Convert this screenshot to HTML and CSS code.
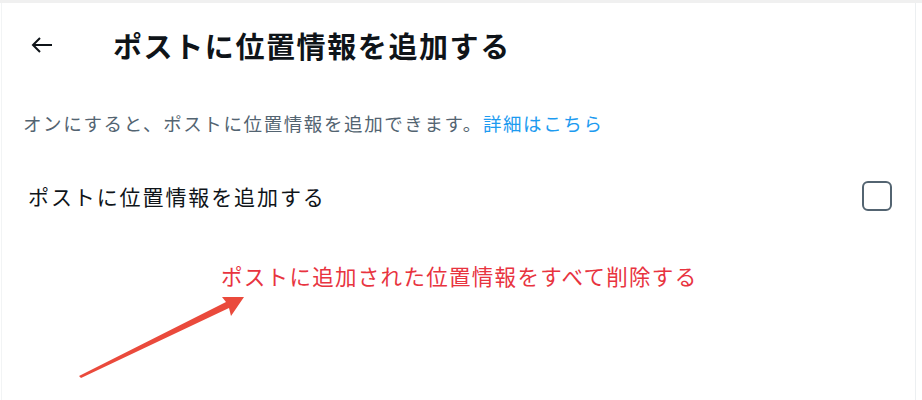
FILE: index.html
```html
<!DOCTYPE html>
<html lang="ja">
<head>
<meta charset="utf-8">
<link rel="stylesheet" href="styles.css">
</head>
<body>
<div class="page">
  <div class="panel">
    <header class="header">
      <svg class="back" viewBox="0 0 24 24" width="24" height="24"><path d="M22 12H3M10 5l-7 7 7 7" fill="none" stroke="#0f1419" stroke-width="2"/></svg>
      <h1 class="title">ポストに位置情報を追加する</h1>
    </header>
    <p class="desc">オンにすると、ポストに位置情報を追加できます。<a class="link" href="#">詳細はこちら</a></p>
    <div class="row">
      <span class="label">ポストに位置情報を追加する</span>
      <span class="check"></span>
    </div>
    <div class="annot">
      <span class="note">ポストに追加された位置情報をすべて削除する</span>
      <svg class="arrow" viewBox="0 0 922 400" width="922" height="400"><polygon points="79,374 226,300 222,295 244,295 231,314 229,306 81,376" fill="#ea4a3c"/></svg>
    </div>
  </div>
</div>
</body>
</html>
```
FILE: styles.css
```css
html, body { margin: 0; padding: 0; background: #fff; }
body { font-family: "Noto Sans CJK JP", "Noto Sans", sans-serif; color: #0f1419; }
.page { border-top: 3px solid #f0f0f0; height: 397px; overflow: hidden; }
.panel { position: relative; width: 915px; margin-left: 1px; border-left: 1px solid #f2f4f5; border-right: 1px solid #eceff1; height: 397px; box-sizing: border-box; }
.header { display: flex; align-items: center; height: 84px; padding-left: 28px; }
.back { width: 24px; height: 24px; }
.title { margin: 0 0 0 59px; font-size: 29px; font-weight: 700; letter-spacing: 1.6px; line-height: 36px; }
.desc { margin: 22px 0 0 21px; font-size: 18.5px; line-height: 28px; color: #536471; letter-spacing: 1.6px; }
.link { color: #1d9bf0; text-decoration: none; }
.row { display: flex; align-items: center; justify-content: space-between; height: 60px; margin-top: 29px; padding: 0 23px 0 26px; }
.label { font-size: 21px; letter-spacing: 1.9px; line-height: 30px; }
.check { width: 26px; height: 26px; border: 2px solid #536471; border-radius: 6px; }
.annot { position: relative; height: 170px; }
.note { position: absolute; left: 219px; top: 36px; font-size: 21.5px; line-height: 28px; color: #e8343f; letter-spacing: 1.3px; white-space: nowrap; }
.arrow { position: absolute; left: -2px; top: -224px; }
```
